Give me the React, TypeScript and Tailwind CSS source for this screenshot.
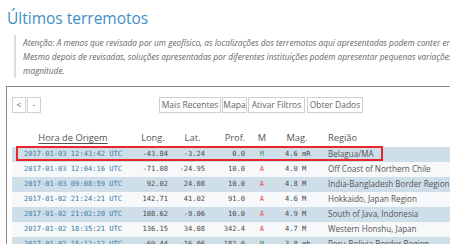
import React from 'react';

type Quake = {
  time: string;
  lon: string;
  lat: string;
  depth: string;
  mode: 'M' | 'A';
  mag: string;
  region: string;
};

const QUAKES: Quake[] = [
  { time: '2017-01-03 12:43:42 UTC', lon: '-43.84', lat: '-3.24', depth: '0.0', mode: 'M', mag: '4.6 mR', region: 'Belagua/MA' },
  { time: '2017-01-03 12:04:16 UTC', lon: '-71.08', lat: '-24.95', depth: '10.0', mode: 'A', mag: '4.0 M', region: 'Off Coast of Northern Chile' },
  { time: '2017-01-03 09:08:59 UTC', lon: '92.02', lat: '24.08', depth: '10.0', mode: 'A', mag: '4.8 M', region: 'India-Bangladesh Border Region' },
  { time: '2017-01-02 21:24:21 UTC', lon: '142.71', lat: '41.02', depth: '91.0', mode: 'A', mag: '4.6 M', region: 'Hokkaido, Japan Region' },
  { time: '2017-01-02 21:02:20 UTC', lon: '108.62', lat: '-9.06', depth: '10.0', mode: 'A', mag: '4.9 M', region: 'South of Java, Indonesia' },
  { time: '2017-01-02 18:35:21 UTC', lon: '136.15', lat: '34.08', depth: '342.4', mode: 'A', mag: '4.7 M', region: 'Western Honshu, Japan' },
  { time: '2017-01-02 15:12:12 UTC', lon: '-69.44', lat: '-16.06', depth: '182.0', mode: 'M', mag: '3.8 mb', region: 'Peru-Bolivia Border Region' },
];

const COLS = 'grid grid-cols-[122px_38px_41px_37px_24px_46px_1fr]';
const MONO = "font-['DejaVu_Sans_Mono',monospace] text-[7.1px]";

function Btn({ label, w }: { label: string; w: string }) {
  return (
    <button
      className={`${w} h-[16px] border border-[#cfcfcf] bg-white text-[8.5px] leading-[14px] text-[#666] text-center`}
    >
      {label}
    </button>
  );
}

export default function App() {
  return (
    <div className="relative w-[450px] h-[244px] overflow-hidden bg-white font-['Open_Sans',sans-serif]">
      <h1 className="mt-[7px] ml-[7px] text-[15.5px] leading-[23px] font-normal text-[#3d8fc2] whitespace-nowrap">
        Últimos terremotos
      </h1>

      <blockquote className="mt-[5px] ml-[14px] border-l-2 border-[#dddddd] pl-[7px] pt-[1px] text-[8.3px] leading-[14px] italic text-[#666] whitespace-nowrap">
        Atenção: A menos que revisada por um geofísico, as localizações dos terremotos aqui apresentadas podem conter erros
        <br />
        Mesmo depois de revisadas, soluções apresentadas por diferentes instituições podem apresentar pequenas variações de localização e
        <br />
        magnitude.
      </blockquote>

      <div className="mt-[8px] ml-[6px] w-[600px] border-t border-l border-[#8a8a8a] pl-[5px] pt-[10px]">
        <div className="flex">
          <div className="flex gap-[1px]">
            <Btn label="<" w="w-[14px]" />
            <Btn label="-" w="w-[14px]" />
          </div>
          <div className="ml-[118px] flex gap-[1px]">
            <Btn label="Mais Recentes" w="w-[62px]" />
            <Btn label="Mapa" w="w-[25px]" />
            <Btn label="Ativar Filtros" w="w-[57px]" />
            <Btn label="Obter Dados" w="ml-[1px] w-[56px]" />
          </div>
        </div>

        <div className={`${COLS} mt-[18px] mb-[2px] h-[14px] text-[9.3px] leading-[14px] text-[#555]`}>
          <div className="text-center underline underline-offset-2">Hora de Origem</div>
          <div className="text-center">Long.</div>
          <div className="text-center">Lat.</div>
          <div className="text-center pl-[7px]">Prof.</div>
          <div className="text-center">M</div>
          <div className="text-center">Mag.</div>
          <div className="pl-[8px]">Região</div>
        </div>

        {QUAKES.map((q, i) => (
          <div
            key={q.time}
            className={`${COLS} h-[15px] items-center ${i % 2 === 0 ? 'bg-[#cfdfe9]' : 'bg-[#f6f8f9]'}`}
          >
            <div className={`${MONO} text-center text-[#3a7ca8]`}>{q.time}</div>
            <div className={`${MONO} text-right pr-[4px] text-[#4a4a4a]`}>{q.lon}</div>
            <div className={`${MONO} text-right pr-[8px] text-[#4a4a4a]`}>{q.lat}</div>
            <div className={`${MONO} text-right pr-[5px] text-[#4a4a4a]`}>{q.depth}</div>
            <div className={`${MONO} text-center ${q.mode === 'M' ? 'text-[#4ea35a]' : 'text-[#e4534f]'}`}>
              {q.mode}
            </div>
            <div className={`${MONO} pl-[11px] text-[#4a4a4a]`}>{q.mag}</div>
            <div className="pl-[8px] text-[8.1px] text-[#555] whitespace-nowrap">{q.region}</div>
          </div>
        ))}
      </div>

      <div className="absolute left-[16px] top-[146px] w-[367px] h-[15px] border-2 border-[#e8262a]" />
    </div>
  );
}
